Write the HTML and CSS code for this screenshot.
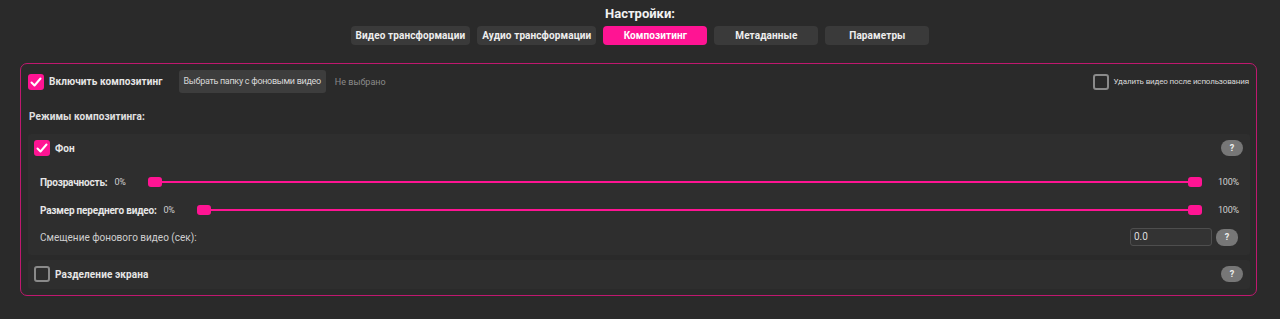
FILE: index.html
```html
<!DOCTYPE html>
<html>
<head>
  <meta charset="utf-8">
  <link rel="stylesheet" href="styles.css">
</head>
<body>
  <div class="header">
    <div class="title">Настройки:</div>
    <div class="tabs">
      <div class="tab">Видео трансформации</div>
      <div class="tab">Аудио трансформации</div>
      <div class="tab active">Композитинг</div>
      <div class="tab">Метаданные</div>
      <div class="tab">Параметры</div>
    </div>
  </div>

  <div class="panel">
    <div class="top-row">
      <label class="check-item">
        <span class="checkbox checked">
          <svg width="12" height="10" viewBox="0 0 12 10"><polyline points="1.5,5.5 4.5,8.5 10.5,1.5" fill="none" stroke="white" stroke-width="2" stroke-linecap="round" stroke-linejoin="round"/></svg>
        </span>
        <span class="label-bold">Включить композитинг</span>
      </label>
      <div class="btn">Выбрать папку с фоновыми видео</div>
      <span class="muted">Не выбрано</span>
      <label class="check-item right">
        <span class="checkbox"></span>
        <span class="label-small">Удалить видео после использования</span>
      </label>
    </div>

    <div class="modes-title">Режимы композитинга:</div>

    <div class="section">
      <div class="section-head">
        <label class="check-item">
          <span class="checkbox checked">
            <svg width="12" height="10" viewBox="0 0 12 10"><polyline points="1.5,5.5 4.5,8.5 10.5,1.5" fill="none" stroke="white" stroke-width="2" stroke-linecap="round" stroke-linejoin="round"/></svg>
          </span>
          <span class="label-bold">Фон</span>
        </label>
        <div class="help">?</div>
      </div>

      <div class="slider-row first">
        <span class="label-bold slider-label">Прозрачность:</span>
        <span class="value">0%</span>
        <div class="slider">
          <span class="thumb"></span><span class="track"></span><span class="thumb"></span>
        </div>
        <span class="value max">100%</span>
      </div>

      <div class="slider-row">
        <span class="label-bold slider-label">Размер переднего видео:</span>
        <span class="value">0%</span>
        <div class="slider">
          <span class="thumb"></span><span class="track"></span><span class="thumb"></span>
        </div>
        <span class="value max">100%</span>
      </div>

      <div class="offset-row">
        <span class="label-normal">Смещение фонового видео (сек):</span>
        <div class="input">0.0</div>
        <div class="help">?</div>
      </div>
    </div>

    <div class="section compact">
      <div class="section-head">
        <label class="check-item">
          <span class="checkbox"></span>
          <span class="label-bold">Разделение экрана</span>
        </label>
        <div class="help">?</div>
      </div>
    </div>
  </div>
</body>
</html>
```

FILE: styles.css
```css
body {
  margin: 0;
  background: #2a2a2a;
  color: #e8e8e8;
  font-family: Roboto, "Liberation Sans", sans-serif;
  font-size: 10px;
}

.header {
  text-align: center;
  padding-top: 6px;
}

.title {
  font-size: 13px;
  font-weight: bold;
  line-height: 15px;
  color: #f2f2f2;
}

.tabs {
  display: flex;
  justify-content: center;
  gap: 7px;
  margin-top: 5px;
}

.tab {
  min-width: 94px;
  height: 19px;
  line-height: 19px;
  padding: 0 5px;
  background: #3a3a3a;
  border-radius: 4px;
  font-size: 10px;
  font-weight: bold;
  letter-spacing: 0.1px;
  color: #eee;
}

.tab.active {
  background: #ff1493;
  color: white;
}

.panel {
  margin: 18px 23px 0 20px;
  border: 1px solid #c0186f;
  border-radius: 7px;
  padding: 6px 6px 6px 7px;
}

.top-row {
  display: flex;
  align-items: center;
  height: 23px;
}

.check-item {
  display: flex;
  align-items: center;
  gap: 5px;
}

.check-item.right {
  margin-left: auto;
  margin-right: 1px;
}

.checkbox {
  width: 16px;
  height: 16px;
  box-sizing: border-box;
  border: 2px solid #8a8a8a;
  border-radius: 3px;
  display: flex;
  align-items: center;
  justify-content: center;
}

.checkbox.checked {
  background: #ff1493;
  border: none;
}

.label-bold {
  font-weight: bold;
  letter-spacing: 0.1px;
  color: #e6e6e6;
  white-space: nowrap;
}

.slider-label {
  letter-spacing: -0.2px;
}

.label-small {
  font-size: 8px;
  letter-spacing: -0.15px;
  color: #d8d8d8;
}

.label-normal {
  color: #cfcfcf;
}

.btn {
  margin-left: 16px;
  height: 23px;
  line-height: 23px;
  padding: 0 5px;
  background: #3d3d3d;
  border-radius: 3px;
  color: #d8d8d8;
  font-size: 9px;
  letter-spacing: -0.3px;
}

.muted {
  margin-left: 9px;
  color: #8a8a8a;
  font-size: 9px;
}

.modes-title {
  margin-top: 18px;
  line-height: 12px;
  font-weight: bold;
  letter-spacing: 0.1px;
  color: #e0e0e0;
  padding-left: 1px;
}

.section {
  margin-top: 11px;
  background: #2e2e2e;
  border-radius: 3px;
  padding: 6px 7px 9px 6px;
}

.section.compact {
  margin-top: 5px;
  padding-bottom: 7px;
}

.section-head {
  display: flex;
  align-items: center;
  justify-content: space-between;
}

.help {
  width: 22px;
  height: 16px;
  line-height: 16px;
  border-radius: 8px;
  background: #777;
  color: #eee;
  font-size: 9px;
  font-weight: bold;
  text-align: center;
}

.slider-row {
  display: flex;
  align-items: center;
  height: 14px;
  margin-top: 14px;
  padding: 0 7px 0 6px;
}

.slider-row.first {
  margin-top: 19px;
}

.value {
  margin-left: 7px;
  font-size: 9px;
  letter-spacing: -0.2px;
  color: #d0d0d0;
  white-space: nowrap;
}

.value.max {
  margin-left: 16px;
  width: 18px;
}

.slider {
  flex: 1;
  display: flex;
  align-items: center;
  margin-left: 22px;
}

.thumb {
  width: 14px;
  height: 10px;
  border-radius: 3px;
  background: #ff1493;
}

.track {
  flex: 1;
  height: 2px;
  background: #ff1493;
}

.offset-row {
  display: flex;
  align-items: center;
  margin-top: 11px;
  padding: 0 5px 0 6px;
}

.offset-row .input {
  margin-left: auto;
  width: 74px;
  height: 16px;
  line-height: 16px;
  padding: 0 3px;
  border: 1px solid #4e4e4e;
  border-radius: 3px;
  background: #333;
  color: #ddd;
}

.offset-row .help {
  margin-left: 4px;
  height: 17px;
  line-height: 17px;
}
```
